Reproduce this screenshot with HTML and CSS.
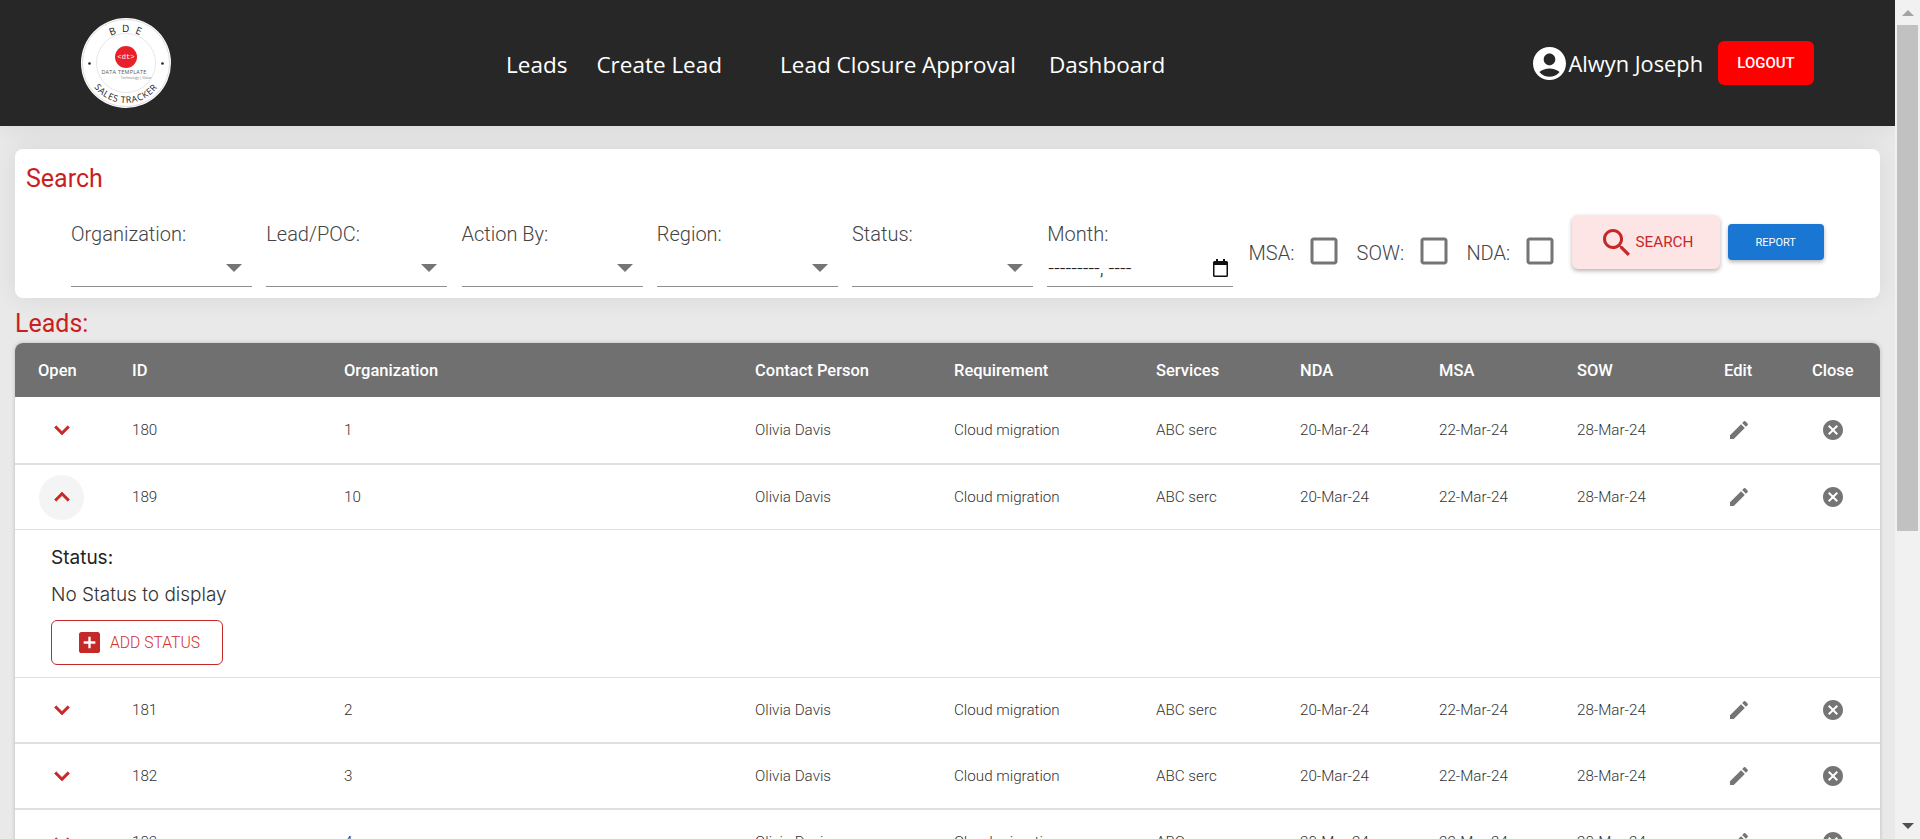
FILE: index.html
```html
<!DOCTYPE html>
<html lang="en">
<head>
    <meta charset="UTF-8">
    <meta name="viewport" content="width=device-width, initial-scale=1.0">
    <title>BDE Sales Tracker</title>
    <link rel="stylesheet" href="styles.css">
</head>
<body>
<div class="window">
    <div class="page">
        <header class="topBar">
            <svg class="logo" viewBox="0 0 90 90">
                <defs>
                    <path id="logoTop" d="M14 45a31 31 0 0 1 62 0"/>
                    <path id="logoBottom" d="M5 45a40 40 0 0 0 80 0"/>
                </defs>
                <circle cx="45" cy="45" r="45" fill="#fff"/>
                <circle cx="45" cy="45" r="43.6" fill="none" stroke="#bbb" stroke-width=".5"/>
                <circle cx="45" cy="45" r="29.5" fill="none" stroke="#ccc" stroke-width=".5"/>
                <circle cx="8.5" cy="45.5" r="1.3" fill="#222"/>
                <circle cx="81.5" cy="45.5" r="1.3" fill="#222"/>
                <text class="logoRing logoRingTop" text-anchor="middle"><textPath href="#logoTop" startOffset="50%">B D E</textPath></text>
                <text class="logoRing" text-anchor="middle"><textPath href="#logoBottom" startOffset="50%">SALES TRACKER</textPath></text>
                <circle cx="45" cy="39" r="11" fill="#e8202a"/>
                <text class="logoDt" x="45" y="41" text-anchor="middle">&lt;dt&gt;</text>
                <text class="logoName" x="43" y="56" text-anchor="middle">DATA TEMPLATE</text>
                <text class="logoSub" x="55" y="61" text-anchor="middle">Technology | Value</text>
            </svg>
            <nav class="mainNav">
                <a class="navLink">Leads</a>
                <a class="navLink navLinkWide">Create Lead</a>
                <a class="navLink">Lead Closure Approval</a>
                <a class="navLink navLinkLast">Dashboard</a>
            </nav>
            <div class="userBox">
                <svg class="userIcon" viewBox="2 2 20 20"><path d="M12 2C6.48 2 2 6.48 2 12s4.48 10 10 10 10-4.48 10-10S17.52 2 12 2zm0 4c1.93 0 3.5 1.57 3.5 3.5S13.93 13 12 13s-3.5-1.57-3.5-3.5S10.07 6 12 6zm0 14c-2.03 0-4.43-.82-6.14-2.88C7.55 15.8 9.68 15 12 15s4.45.8 6.14 2.12C16.43 19.18 14.03 20 12 20z"/></svg>
                <span class="userName">Alwyn Joseph</span>
                <button class="logoutBtn">Logout</button>
            </div>
        </header>

        <section class="searchCard">
            <h2 class="searchTitle">Search</h2>
            <div class="filterRow">
                <div class="field">
                    <label class="fieldLabel">Organization:</label>
                    <div class="selectBox"><span class="selectArrow"></span></div>
                </div>
                <div class="field">
                    <label class="fieldLabel">Lead/POC:</label>
                    <div class="selectBox"><span class="selectArrow"></span></div>
                </div>
                <div class="field">
                    <label class="fieldLabel">Action By:</label>
                    <div class="selectBox"><span class="selectArrow"></span></div>
                </div>
                <div class="field">
                    <label class="fieldLabel">Region:</label>
                    <div class="selectBox"><span class="selectArrow"></span></div>
                </div>
                <div class="field">
                    <label class="fieldLabel">Status:</label>
                    <div class="selectBox"><span class="selectArrow"></span></div>
                </div>
                <div class="field fieldMonth">
                    <label class="fieldLabel">Month:</label>
                    <div class="selectBox monthBox">
                        <span class="monthValue">---------, ----</span>
                        <svg class="calendarIcon" viewBox="0 0 15 18"><path d="M3 0h2v2h5V0h2v2h1.5A1.5 1.5 0 0 1 15 3.5v13a1.5 1.5 0 0 1-1.5 1.5h-12A1.5 1.5 0 0 1 0 16.5v-13A1.5 1.5 0 0 1 1.5 2H3zM1.5 6v10.5h12V6z"/></svg>
                    </div>
                </div>
                <div class="checkGroup">
                    <span class="fieldLabel">MSA:</span>
                    <svg class="checkIcon" viewBox="0 0 24 24"><path d="M19 5v14H5V5h14m0-2H5c-1.1 0-2 .9-2 2v14c0 1.1.9 2 2 2h14c1.1 0 2-.9 2-2V5c0-1.1-.9-2-2-2z"/></svg>
                </div>
                <div class="checkGroup">
                    <span class="fieldLabel">SOW:</span>
                    <svg class="checkIcon" viewBox="0 0 24 24"><path d="M19 5v14H5V5h14m0-2H5c-1.1 0-2 .9-2 2v14c0 1.1.9 2 2 2h14c1.1 0 2-.9 2-2V5c0-1.1-.9-2-2-2z"/></svg>
                </div>
                <div class="checkGroup">
                    <span class="fieldLabel">NDA:</span>
                    <svg class="checkIcon" viewBox="0 0 24 24"><path d="M19 5v14H5V5h14m0-2H5c-1.1 0-2 .9-2 2v14c0 1.1.9 2 2 2h14c1.1 0 2-.9 2-2V5c0-1.1-.9-2-2-2z"/></svg>
                </div>
                <button class="searchBtn">
                    <svg class="searchIcon" viewBox="3 3 17.5 17.5"><path d="M15.5 14h-.79l-.28-.27C15.41 12.59 16 11.11 16 9.5 16 5.91 13.09 3 9.5 3S3 5.91 3 9.5 5.91 16 9.5 16c1.61 0 3.09-.59 4.23-1.57l.27.28v.79l5 4.99L20.49 19l-4.99-5zm-6 0C7.01 14 5 11.99 5 9.5S7.01 5 9.5 5 14 7.01 14 9.5 11.99 14 9.5 14z"/></svg>
                    Search
                </button>
                <button class="reportBtn">Report</button>
            </div>
        </section>

        <h2 class="leadsTitle">Leads:</h2>

        <table class="leadsTable">
            <colgroup>
                <col class="colOpen"><col class="colId"><col class="colOrg"><col class="colContact"><col class="colReq">
                <col class="colServices"><col class="colNda"><col class="colMsa"><col class="colSow"><col class="colEdit"><col class="colClose">
            </colgroup>
            <thead>
                <tr>
                    <th class="firstCell">Open</th><th>ID</th><th>Organization</th><th>Contact Person</th><th>Requirement</th>
                    <th>Services</th><th>NDA</th><th>MSA</th><th>SOW</th><th>Edit</th><th>Close</th>
                </tr>
            </thead>
            <tbody>
                <tr class="rowFirst">
                    <td class="firstCell"><span class="openBtn"><svg class="chevron" viewBox="0 0 24 24"><path d="M7.41 8.59 12 13.17l4.59-4.58L18 10l-6 6-6-6 1.41-1.41z"/></svg></span></td>
                    <td>180</td><td>1</td><td>Olivia Davis</td><td>Cloud migration</td><td>ABC serc</td>
                    <td>20-Mar-24</td><td>22-Mar-24</td><td>28-Mar-24</td>
                    <td><svg class="rowIcon editIcon" viewBox="0 0 24 24"><path d="M3 17.25V21h3.75L17.81 9.94l-3.75-3.75L3 17.25zM20.71 7.04c.39-.39.39-1.02 0-1.41l-2.34-2.34a.9959.9959 0 0 0-1.41 0l-1.83 1.83 3.75 3.75 1.83-1.83z"/></svg></td>
                    <td><svg class="rowIcon closeIcon" viewBox="0 0 24 24"><path d="M12 2C6.47 2 2 6.47 2 12s4.47 10 10 10 10-4.47 10-10S17.53 2 12 2zm5 13.59L15.59 17 12 13.41 8.41 17 7 15.59 10.59 12 7 8.41 8.41 7 12 10.59 15.59 7 17 8.41 13.41 12 17 15.59z"/></svg></td>
                </tr>
                <tr class="rowOpen">
                    <td class="firstCell"><span class="openBtn openBtnActive"><svg class="chevron" viewBox="0 0 24 24"><path d="M7.41 15.41 12 10.83l4.59 4.58L18 14l-6-6-6 6 1.41 1.41z"/></svg></span></td>
                    <td>189</td><td>10</td><td>Olivia Davis</td><td>Cloud migration</td><td>ABC serc</td>
                    <td>20-Mar-24</td><td>22-Mar-24</td><td>28-Mar-24</td>
                    <td><svg class="rowIcon editIcon" viewBox="0 0 24 24"><path d="M3 17.25V21h3.75L17.81 9.94l-3.75-3.75L3 17.25zM20.71 7.04c.39-.39.39-1.02 0-1.41l-2.34-2.34a.9959.9959 0 0 0-1.41 0l-1.83 1.83 3.75 3.75 1.83-1.83z"/></svg></td>
                    <td><svg class="rowIcon closeIcon" viewBox="0 0 24 24"><path d="M12 2C6.47 2 2 6.47 2 12s4.47 10 10 10 10-4.47 10-10S17.53 2 12 2zm5 13.59L15.59 17 12 13.41 8.41 17 7 15.59 10.59 12 7 8.41 8.41 7 12 10.59 15.59 7 17 8.41 13.41 12 17 15.59z"/></svg></td>
                </tr>
                <tr class="rowDetail">
                    <td colspan="11">
                        <div class="statusTitle">Status:</div>
                        <div class="statusEmpty">No Status to display</div>
                        <button class="addStatusBtn">
                            <svg class="addIcon" viewBox="3 3 18 18"><path d="M19 3H5c-1.11 0-2 .9-2 2v14c0 1.1.89 2 2 2h14c1.1 0 2-.9 2-2V5c0-1.1-.9-2-2-2zm-2 10h-4v4h-2v-4H7v-2h4V7h2v4h4v2z"/></svg>
                            Add Status
                        </button>
                    </td>
                </tr>
                <tr>
                    <td class="firstCell"><span class="openBtn"><svg class="chevron" viewBox="0 0 24 24"><path d="M7.41 8.59 12 13.17l4.59-4.58L18 10l-6 6-6-6 1.41-1.41z"/></svg></span></td>
                    <td>181</td><td>2</td><td>Olivia Davis</td><td>Cloud migration</td><td>ABC serc</td>
                    <td>20-Mar-24</td><td>22-Mar-24</td><td>28-Mar-24</td>
                    <td><svg class="rowIcon editIcon" viewBox="0 0 24 24"><path d="M3 17.25V21h3.75L17.81 9.94l-3.75-3.75L3 17.25zM20.71 7.04c.39-.39.39-1.02 0-1.41l-2.34-2.34a.9959.9959 0 0 0-1.41 0l-1.83 1.83 3.75 3.75 1.83-1.83z"/></svg></td>
                    <td><svg class="rowIcon closeIcon" viewBox="0 0 24 24"><path d="M12 2C6.47 2 2 6.47 2 12s4.47 10 10 10 10-4.47 10-10S17.53 2 12 2zm5 13.59L15.59 17 12 13.41 8.41 17 7 15.59 10.59 12 7 8.41 8.41 7 12 10.59 15.59 7 17 8.41 13.41 12 17 15.59z"/></svg></td>
                </tr>
                <tr>
                    <td class="firstCell"><span class="openBtn"><svg class="chevron" viewBox="0 0 24 24"><path d="M7.41 8.59 12 13.17l4.59-4.58L18 10l-6 6-6-6 1.41-1.41z"/></svg></span></td>
                    <td>182</td><td>3</td><td>Olivia Davis</td><td>Cloud migration</td><td>ABC serc</td>
                    <td>20-Mar-24</td><td>22-Mar-24</td><td>28-Mar-24</td>
                    <td><svg class="rowIcon editIcon" viewBox="0 0 24 24"><path d="M3 17.25V21h3.75L17.81 9.94l-3.75-3.75L3 17.25zM20.71 7.04c.39-.39.39-1.02 0-1.41l-2.34-2.34a.9959.9959 0 0 0-1.41 0l-1.83 1.83 3.75 3.75 1.83-1.83z"/></svg></td>
                    <td><svg class="rowIcon closeIcon" viewBox="0 0 24 24"><path d="M12 2C6.47 2 2 6.47 2 12s4.47 10 10 10 10-4.47 10-10S17.53 2 12 2zm5 13.59L15.59 17 12 13.41 8.41 17 7 15.59 10.59 12 7 8.41 8.41 7 12 10.59 15.59 7 17 8.41 13.41 12 17 15.59z"/></svg></td>
                </tr>
                <tr>
                    <td class="firstCell"><span class="openBtn"><svg class="chevron" viewBox="0 0 24 24"><path d="M7.41 8.59 12 13.17l4.59-4.58L18 10l-6 6-6-6 1.41-1.41z"/></svg></span></td>
                    <td>183</td><td>4</td><td>Olivia Davis</td><td>Cloud migration</td><td>ABC serc</td>
                    <td>20-Mar-24</td><td>22-Mar-24</td><td>28-Mar-24</td>
                    <td><svg class="rowIcon editIcon" viewBox="0 0 24 24"><path d="M3 17.25V21h3.75L17.81 9.94l-3.75-3.75L3 17.25zM20.71 7.04c.39-.39.39-1.02 0-1.41l-2.34-2.34a.9959.9959 0 0 0-1.41 0l-1.83 1.83 3.75 3.75 1.83-1.83z"/></svg></td>
                    <td><svg class="rowIcon closeIcon" viewBox="0 0 24 24"><path d="M12 2C6.47 2 2 6.47 2 12s4.47 10 10 10 10-4.47 10-10S17.53 2 12 2zm5 13.59L15.59 17 12 13.41 8.41 17 7 15.59 10.59 12 7 8.41 8.41 7 12 10.59 15.59 7 17 8.41 13.41 12 17 15.59z"/></svg></td>
                </tr>
            </tbody>
        </table>
    </div>

    <div class="scrollBar">
        <span class="scrollUp"></span>
        <div class="scrollThumb"></div>
        <span class="scrollDown"></span>
    </div>
</div>
</body>
</html>
```

FILE: styles.css
```css
html, body{
    margin: 0;
    padding: 0;
    height: 100%;
    overflow: hidden;
}
body{
    font-family: Roboto, sans-serif;
    background-color: #e9e9e9;
}
.window{
    display: flex;
    height: 839px;
}
.page{
    flex: 1;
    min-width: 0;
    overflow: hidden;
}

/* top bar */
.topBar{
    height: 126px;
    box-sizing: border-box;
    background-color: #272727;
    display: flex;
    align-items: center;
    padding: 0 81px;
    box-shadow: 0 2px 24px rgba(0, 0, 0, 0.08);
    position: relative;
}
.logo{
    width: 90px;
    height: 90px;
    flex: none;
    margin-top: -1px;
}
.logoRing{
    font-family: "Open Sans", sans-serif;
    font-size: 9px;
    fill: #222;
    letter-spacing: 0.6px;
}
.logoRingTop{
    font-size: 10px;
    letter-spacing: 1.4px;
}
.logoDt{
    font-family: "Liberation Mono", monospace;
    font-size: 7px;
    fill: #fff;
}
.logoName{
    font-family: "Open Sans", sans-serif;
    font-size: 5.4px;
    fill: #555;
    letter-spacing: 0.3px;
}
.logoSub{
    font-family: "Open Sans", sans-serif;
    font-size: 3.4px;
    fill: #777;
}
.mainNav{
    display: flex;
    gap: 29px;
    margin-left: 335px;
    padding-top: 2px;
}
.navLink{
    color: #fff;
    font-family: "Open Sans", sans-serif;
    font-size: 22.5px;
    white-space: nowrap;
}
.navLinkWide{
    margin-right: 29px;
}
.navLinkLast{
    margin-left: 4px;
}
.userBox{
    margin-left: auto;
    display: flex;
    align-items: center;
}
.userIcon{
    width: 33px;
    height: 33px;
    fill: #fff;
    margin-right: 3px;
}
.userName{
    color: #fff;
    font-family: "Open Sans", sans-serif;
    font-size: 21.8px;
    margin-right: 15px;
    white-space: nowrap;
}
.logoutBtn{
    width: 96px;
    height: 44px;
    border: none;
    border-radius: 6px;
    background-color: #ff0000;
    color: #fff;
    font-family: Roboto, sans-serif;
    font-weight: 500;
    font-size: 15px;
    text-transform: uppercase;
}

/* search card */
.searchCard{
    margin: 23px 15px 0;
    height: 149px;
    box-sizing: border-box;
    background-color: #fff;
    border-radius: 8px;
    padding: 16px 11px 0;
    box-shadow: 0 0 26px rgba(0, 0, 0, 0.08);
}
.searchTitle, .leadsTitle{
    margin: 0;
    font-weight: 400;
    font-size: 25px;
    line-height: 28px;
    color: #c91f1f;
}
.filterRow{
    display: flex;
    gap: 14.25px;
    margin-top: 22px;
    padding-left: 45px;
    height: 72px;
}
.field{
    width: 181px;
    margin-top: 7px;
    display: flex;
    flex-direction: column;
}
.fieldMonth{
    width: 186px;
    margin-right: 1px;
}
.fieldLabel{
    font-weight: 300;
    font-size: 20px;
    line-height: 24px;
    color: #444;
}
.selectBox{
    flex: 1;
    border-bottom: 1px solid #8f8f8f;
    position: relative;
}
.selectArrow{
    position: absolute;
    right: 10px;
    top: 18px;
    border-left: 8px solid transparent;
    border-right: 8px solid transparent;
    border-top: 8px solid #757575;
}
.monthBox{
    display: flex;
    align-items: center;
    justify-content: space-between;
    padding: 4px 5px 0 1px;
}
.monthValue{
    font-size: 20px;
    font-weight: 300;
    line-height: 24px;
    color: #222;
}
.calendarIcon{
    width: 15px;
    height: 18px;
    fill: #111;
}
.checkGroup{
    display: flex;
    align-items: center;
    height: 36px;
    margin-top: 20px;
}
.checkIcon{
    width: 36px;
    height: 36px;
    fill: #757575;
    margin: -4px 0 0 12px;
}
.searchBtn{
    width: 148px;
    height: 54px;
    padding: 0 6px 0 10px;
    border: none;
    border-radius: 6px;
    background-color: #fde5e5;
    color: #c62828;
    font-family: Roboto, sans-serif;
    font-size: 15.3px;
    font-weight: 400;
    text-transform: uppercase;
    display: flex;
    align-items: center;
    justify-content: center;
    gap: 5px;
    box-shadow: 0 2px 4px rgba(0, 0, 0, 0.3);
}
.searchIcon{
    width: 27px;
    height: 27px;
    fill: #c62828;
}
.reportBtn{
    width: 96px;
    height: 36px;
    margin: 9px 0 0 -7px;
    border: none;
    border-radius: 4px;
    background-color: #1976d2;
    color: #fff;
    font-family: Roboto, sans-serif;
    font-size: 11px;
    text-transform: uppercase;
    box-shadow: 0 2px 4px rgba(0, 0, 0, 0.3);
}

/* leads table */
.leadsTitle{
    margin: 12px 15px 5px;
}
.leadsTable{
    width: 1865px;
    margin-left: 15px;
    table-layout: fixed;
    border-collapse: separate;
    border-spacing: 0;
    background-color: #fff;
    box-shadow: 0 0 4px rgba(0, 0, 0, 0.2);
    border-radius: 8px 8px 0 0;
}
.colOpen{ width: 101px; }
.colId{ width: 212px; }
.colOrg{ width: 411px; }
.colContact{ width: 199px; }
.colReq{ width: 202px; }
.colServices{ width: 144px; }
.colNda{ width: 139px; }
.colMsa{ width: 138px; }
.colSow{ width: 147px; }
.colEdit{ width: 88px; }
.colClose{ width: 84px; }
.leadsTable th{
    height: 54px;
    padding: 0 0 0 16px;
    background-color: #707070;
    color: #fff;
    font-weight: 500;
    font-size: 16.5px;
    text-align: left;
}
.leadsTable th.firstCell{
    padding-left: 23px;
    border-top-left-radius: 8px;
}
.leadsTable th:last-child{
    border-top-right-radius: 8px;
}
.leadsTable td{
    height: 64px;
    padding: 0 0 0 16px;
    font-weight: 300;
    font-size: 15.2px;
    color: #333;
    border-bottom: 2px solid #e0e0e0;
    vertical-align: middle;
}
.leadsTable td.firstCell{
    padding-left: 24px;
}
.leadsTable .rowFirst td{
    height: 66px;
}
.leadsTable .rowOpen td{
    height: 64px;
    border-bottom-width: 1px;
}
.leadsTable .rowDetail td{
    height: 147px;
    padding: 0 0 0 36px;
    border-bottom-width: 1px;
    vertical-align: top;
}
.openBtn{
    width: 45px;
    height: 45px;
    border-radius: 50%;
    display: flex;
    align-items: center;
    justify-content: center;
}
.openBtnActive{
    background-color: #f4f4f4;
}
.chevron{
    width: 30px;
    height: 30px;
    fill: #c62828;
    stroke: #c62828;
    stroke-width: 0.5;
}
.rowIcon{
    display: block;
    width: 24px;
    height: 24px;
    fill: #757575;
}
.editIcon{
    margin-left: 3px;
}
.closeIcon{
    margin-left: 9px;
}
.statusTitle{
    margin-top: 16px;
    font-family: Inter, sans-serif;
    font-weight: 400;
    font-size: 19px;
    line-height: 24px;
    color: #222;
}
.statusEmpty{
    margin-top: 13px;
    font-family: Inter, sans-serif;
    font-weight: 300;
    font-size: 19px;
    line-height: 24px;
    color: #333;
}
.addStatusBtn{
    width: 172px;
    height: 45px;
    margin-top: 13px;
    padding: 0 0 0 5px;
    box-sizing: border-box;
    border: 1px solid #c62828;
    border-radius: 6px;
    background-color: #fff;
    color: #d32f2f;
    font-family: Roboto, sans-serif;
    font-weight: 300;
    font-size: 15.7px;
    text-transform: uppercase;
    display: flex;
    align-items: center;
    justify-content: center;
    gap: 10px;
}
.addIcon{
    width: 21px;
    height: 21px;
    fill: #c62828;
}

/* scrollbar strip, the browser's own one is not drawn in the picture */
.scrollBar{
    width: 25px;
    flex: none;
    background-color: #f1f1f1;
    display: flex;
    flex-direction: column;
    align-items: center;
    box-sizing: border-box;
}
.scrollUp{
    margin-top: 10px;
    border-left: 6px solid transparent;
    border-right: 6px solid transparent;
    border-bottom: 6px solid #a3a3a3;
}
.scrollThumb{
    width: 21px;
    height: 506px;
    margin-top: 9px;
    background-color: #c1c1c1;
}
.scrollDown{
    margin-top: auto;
    margin-bottom: 10px;
    border-left: 6px solid transparent;
    border-right: 6px solid transparent;
    border-top: 6px solid #505050;
}
```
